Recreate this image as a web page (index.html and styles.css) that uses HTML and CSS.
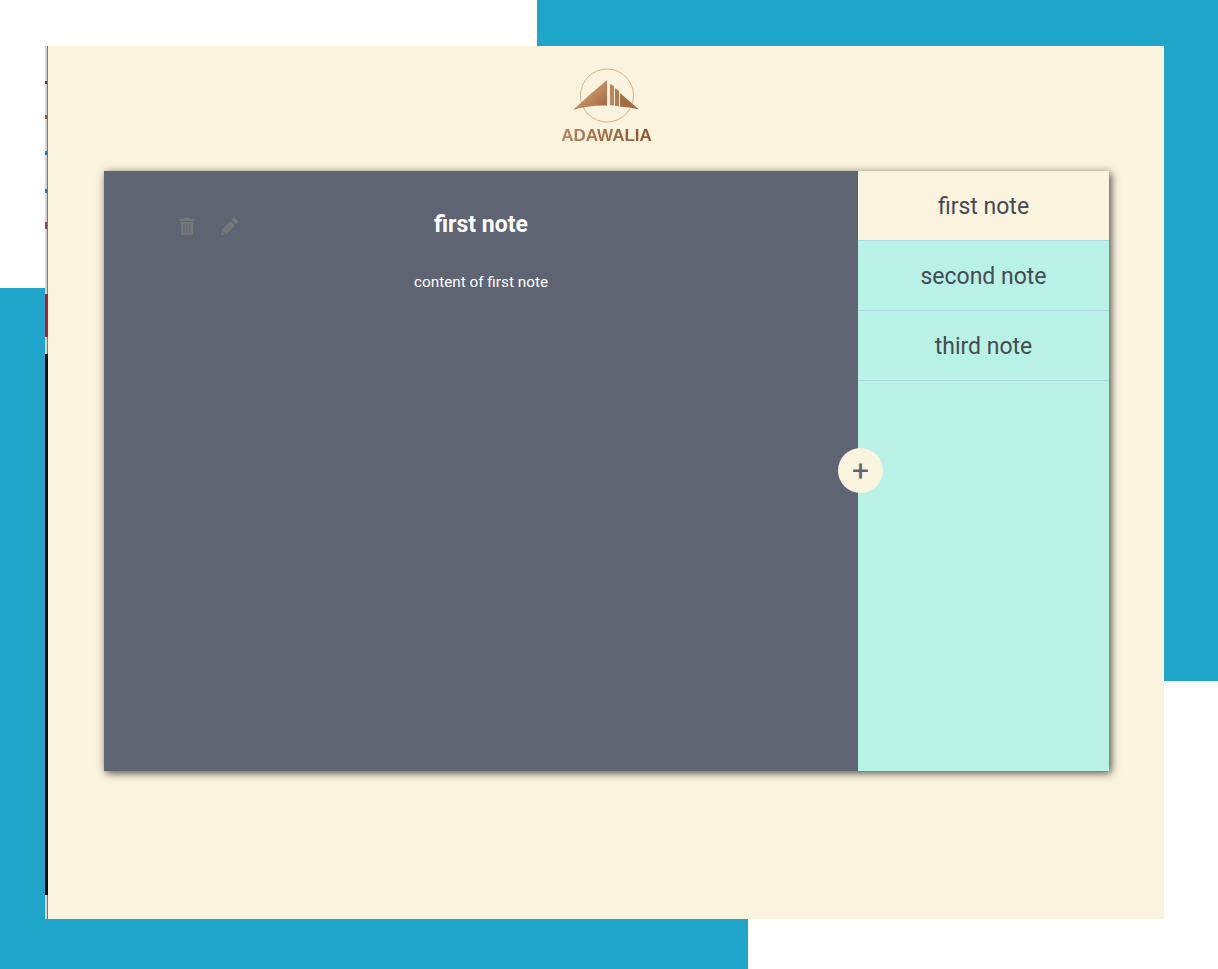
FILE: index.html
```html
<!DOCTYPE html>
<html lang="en">
<head>
<meta charset="UTF-8" />
<title>Adawalia Notes</title>
<link rel="stylesheet" href="styles.css">
</head>
<body>

<div class="shape shape-top"></div>
<div class="shape shape-bottom"></div>

<div class="page">
  <div class="edge">
    <span class="edge-dot dot-1"></span>
    <span class="edge-dot dot-2"></span>
    <span class="edge-dot dot-3"></span>
    <span class="edge-dot dot-4"></span>
    <span class="edge-dot dot-5"></span>
    <span class="edge-red"></span>
    <span class="edge-black"></span>
  </div>
  <div class="app">
    <header class="logo">
      <svg class="logo-mark" width="70" height="60" viewBox="0 0 70 60">
        <defs>
          <linearGradient id="copper" x1="0" y1="0" x2="1" y2="1">
            <stop offset="0" stop-color="#e0b48c" />
            <stop offset="0.55" stop-color="#c08a5c" />
            <stop offset="1" stop-color="#9c6040" />
          </linearGradient>
        </defs>
        <circle cx="35" cy="29.500" r="26.500" fill="none" stroke="#d8b08a" stroke-width="1" />
        <path d="M1 44 Q18 28 35 14 L35 39.500 Q16 39 1 44 Z" fill="url(#copper)" />
        <path d="M38 18 L42 20 L42 39.500 L38 39.200 Z" fill="#bd8659" />
        <path d="M43 22 L47 25 L47 40.500 L43 39.800 Z" fill="#b47c52" />
        <path d="M48 27 L67 43.500 Q58 41 48 40.800 Z" fill="#a66c46" />
      </svg>
      <div class="logo-name">ADAWALIA</div>
    </header>

    <main class="board">
      <section class="note">
        <div class="note-tools">
          <svg class="tool" width="16" height="18" viewBox="0 0 16 18">
            <path d="M5 2 L5.800 0.500 L10.200 0.500 L11 2 L15.500 2 L15.500 4 L0.500 4 L0.500 2 Z M1.500 5 L14.500 5 L14 16.500 Q14 18 12.500 18 L3.500 18 Q2 18 2 16.500 Z M4.500 7 L4.500 16 L5.500 16 L5.500 7 Z M7.500 7 L7.500 16 L8.500 16 L8.500 7 Z M10.500 7 L10.500 16 L11.500 16 L11.500 7 Z" fill="#77777a" fill-rule="evenodd" />
          </svg>
          <svg class="tool" width="18" height="18" viewBox="0 0 18 18">
            <path d="M12.500 1 Q13.500 0.200 14.500 1 L17 3.500 Q17.800 4.500 17 5.500 L15 7.500 L10.500 3 Z M9.500 4 L14 8.500 L5 17.500 L0.500 18 L0.500 13 Z M2 14 L2 16.500 L4.500 16.500 Z" fill="#77777a" fill-rule="evenodd" />
          </svg>
        </div>
        <h1 class="note-title">first note</h1>
        <p class="note-body">content of first note</p>
      </section>

      <aside class="list">
        <div class="list-item is-active">first note</div>
        <div class="list-item">second note</div>
        <div class="list-item">third note</div>
        <button class="add-btn">+</button>
      </aside>
    </main>
  </div>
</div>

</body>
</html>
```

FILE: styles.css
```css
html, body {
  margin: 0;
  height: 969px;
  overflow: hidden;
}
body {
  position: relative;
  background: #fff;
  font-family: Roboto, "Noto Sans", sans-serif;
  padding: 46px 54px 50px 45px;
  box-sizing: border-box;
}
.shape {
  position: absolute;
  height: 681px;
  background: #1fa5ca;
}
.shape-top {
  top: 0;
  right: 0;
  width: 681px;
}
.shape-bottom {
  left: 0;
  bottom: 0;
  width: 748px;
}
.page {
  position: relative;
  display: flex;
  height: 873px;
}
.edge {
  width: 2px;
  flex: none;
  position: relative;
  background: #d4d4d4;
  border-right: 1px solid #77777c;
}
.edge-dot {
  position: absolute;
  left: 0;
  width: 2px;
  height: 4px;
  background: #2a6fa8;
}
.dot-1 { top: 35px; height: 3px; background: #6a2a6a; }
.dot-2 { top: 69px; background: #8a5a30; }
.dot-3 { top: 105px; background: #1f78c0; }
.dot-4 { top: 143px; background: #1f78c0; }
.dot-5 { top: 176px; height: 7px; background: #8a4a50; }
.edge-red {
  position: absolute;
  left: 0;
  top: 248px;
  width: 3px;
  height: 43px;
  background: #c4122f;
}
.edge-black {
  position: absolute;
  left: 0;
  top: 308px;
  width: 3px;
  height: 541px;
  background: #0c0c0c;
}
.app {
  flex: 1;
  background: #faf3dd;
  padding: 0 55px 0 56px;
}
.logo {
  height: 125px;
  display: flex;
  flex-direction: column;
  align-items: center;
  padding-top: 20px;
  box-sizing: border-box;
}
.logo-mark {
  display: block;
}
.logo-name {
  margin-top: 1px;
  font-family: "Liberation Sans", sans-serif;
  font-size: 17px;
  line-height: 18px;
  font-weight: 700;
  color: transparent;
  background: linear-gradient(90deg, #b9825a, #8f5433);
  -webkit-background-clip: text;
  background-clip: text;
}
.board {
  display: flex;
  height: 600px;
  box-shadow: 2px 2px 8px rgba(0, 0, 0, 0.7);
}
.note {
  flex: 1;
  position: relative;
  background: #5e6472;
  color: #fff;
  text-align: center;
}
.note-tools {
  position: absolute;
  top: 46px;
  left: 75px;
  display: flex;
  gap: 26px;
}
.tool {
  display: block;
}
.note-title {
  margin: 0;
  padding-top: 39px;
  font-size: 23px;
  line-height: 30px;
  font-weight: 700;
}
.note-body {
  margin: 32px 0 0;
  font-size: 15.3px;
  line-height: 20px;
}
.list {
  width: 251px;
  flex: none;
  position: relative;
  background: #b8f2e6;
}
.list-item {
  height: 67px;
  padding-top: 2px;
  line-height: 67px;
  border-bottom: 1px solid #aed9e0;
  text-align: center;
  font-size: 23px;
  color: #474a51;
}
.list-item.is-active {
  background: #faf3dd;
}
.add-btn {
  position: absolute;
  top: 277px;
  left: -20px;
  width: 45px;
  height: 45px;
  padding: 0;
  border: none;
  border-radius: 50%;
  background: #faf3dd;
  color: #5e6472;
  font-family: inherit;
  font-size: 30px;
  font-weight: 400;
  line-height: 45px;
  text-align: center;
}
```
